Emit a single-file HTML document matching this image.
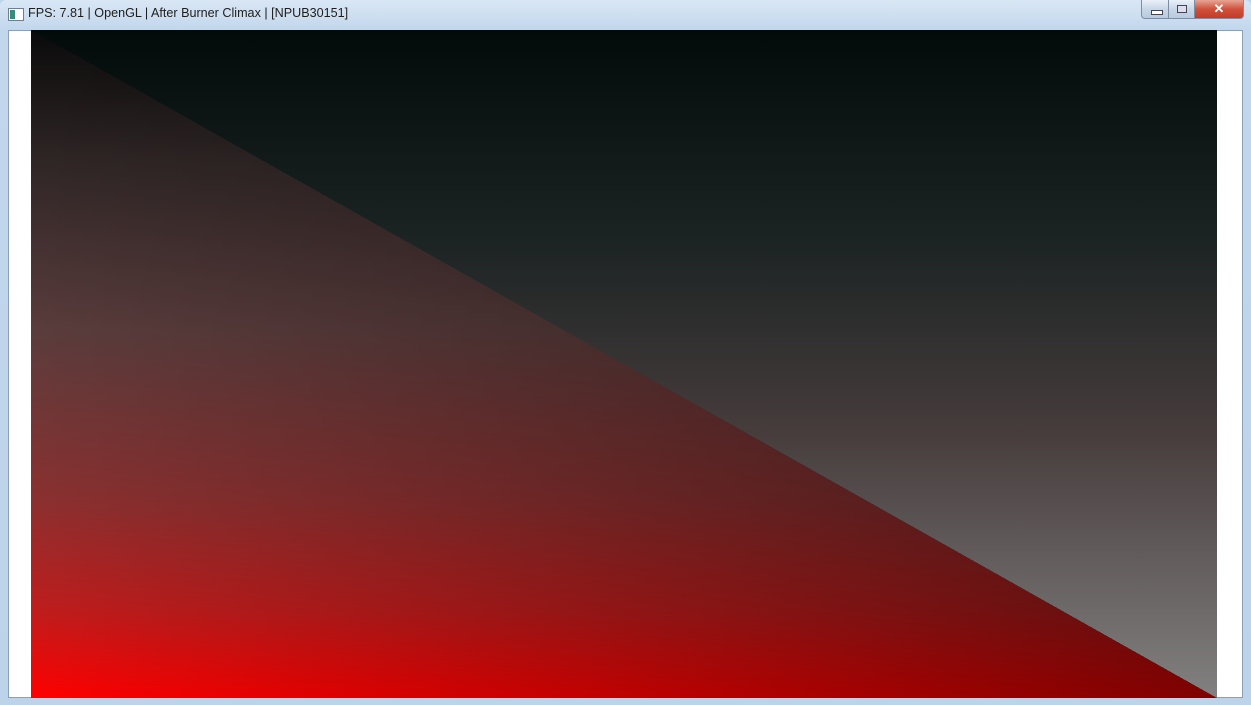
<!DOCTYPE html>
<html><head><style>
html,body{margin:0;padding:0;width:1251px;height:705px;overflow:hidden;background:#bcd3ea;font-family:"Liberation Sans",sans-serif}
.frame{position:absolute;left:0;top:0;width:1251px;height:705px;background:linear-gradient(#d9e7f5,#c2d7ec 30px,#bdd3ea);border-radius:6px 6px 0 0}
.title{position:absolute;left:28px;top:6px;font-size:12.6px;color:#1e1e1e}
.icon{position:absolute;left:8px;top:8px;width:14px;height:11px;background:#fff;border:1px solid #6d7f92}
.icon:after{content:"";position:absolute;left:1px;top:1px;width:5px;height:9px;background:#3a8a7c}
.client{position:absolute;left:8px;top:30px;width:1235px;height:668px;background:#fff;border:1px solid #8aa0b8;box-sizing:border-box}
.btns{position:absolute;left:1141px;top:0;width:103px;height:19px}
.b{position:absolute;top:0;height:19px;border:1px solid #7b8ea6;border-top:none;box-sizing:border-box;background:linear-gradient(#e9f0f8,#c8d7e8 50%,#b8cade)}
.min{left:0;width:28px;border-radius:0 0 0 4px}
.max{left:27px;width:27px}
.cls{left:53px;width:50px;border-radius:0 0 4px 0;background:linear-gradient(#e8a595,#d0513c 50%,#c13c28);color:#fff;font-weight:bold;font-size:13px;text-align:center;line-height:18px}
</style></head><body>
<div class="frame"></div>
<div class="icon"></div>
<div class="title">FPS: 7.81 | OpenGL | After Burner Climax | [NPUB30151]</div>
<div class="btns">
<div class="b min"><div style="position:absolute;left:9px;top:10px;width:10px;height:3px;background:#fff;border:1px solid #445"></div></div>
<div class="b max"><div style="position:absolute;left:8px;top:5px;width:8px;height:6px;border:1px solid #445;background:#dde"></div></div>
<div class="b cls">✕</div>
</div>
<div class="client"></div>
<svg style="position:absolute;left:31px;top:30px" width="1186" height="668" viewBox="0 0 1186 668" shape-rendering="crispEdges">
<defs>
<linearGradient id="up" x1="0" y1="0" x2="0" y2="1">
<stop offset="0" stop-color="#020a0a"/><stop offset="0.3" stop-color="#1a2222"/><stop offset="0.6" stop-color="#463c3c"/><stop offset="1" stop-color="#828080"/>
</linearGradient>
<linearGradient id="lo" x1="0" y1="0" x2="0" y2="1">
<stop offset="0" stop-color="#0a0a0a"/><stop offset="0.2" stop-color="#302626"/><stop offset="0.45" stop-color="#5a3c3c"/><stop offset="0.7" stop-color="#8a3030"/><stop offset="0.87" stop-color="#c01c1c"/><stop offset="1" stop-color="#ff0000"/>
</linearGradient>
<linearGradient id="dk" x1="0" y1="0" x2="1" y2="0">
<stop offset="0" stop-color="#000" stop-opacity="0"/><stop offset="1" stop-color="#000" stop-opacity="0.5"/>
</linearGradient>
</defs>
<rect width="1186" height="668" fill="url(#up)"/>
<polygon points="0,0 1186,668 0,668" fill="url(#lo)"/>
<polygon points="0,0 1186,668 0,668" fill="url(#dk)"/>
</svg>
</body></html>
